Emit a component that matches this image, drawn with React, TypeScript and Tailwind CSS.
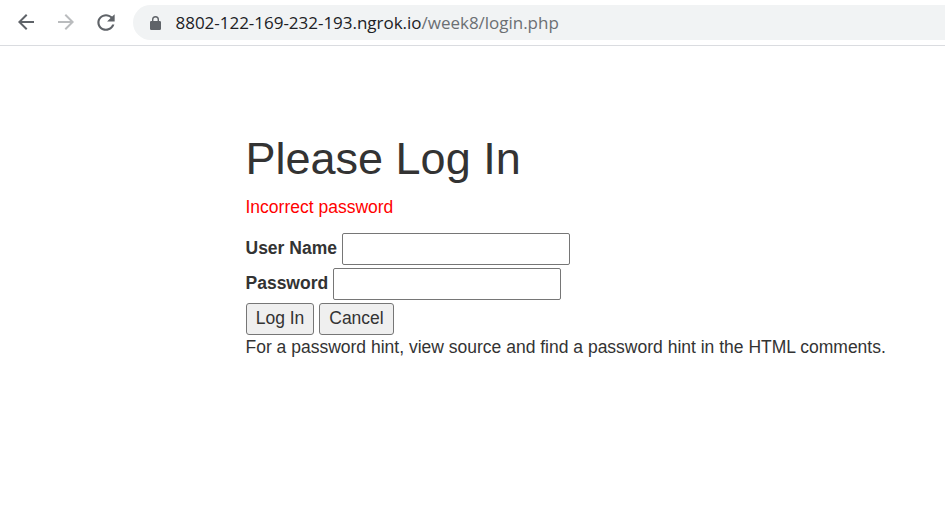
import React from "react";

const sans = "font-['Liberation_Sans',Arial,sans-serif]";

function BrowserBar() {
  return (
    <header className="flex h-[46px] items-start border-b border-[#dadce0] bg-white pl-[14px]">
      <svg className="mt-[10px] h-6 w-6 shrink-0" viewBox="0 0 24 24" fill="#5f6368">
        <path d="M20 11H7.83l5.59-5.59L12 4l-8 8 8 8 1.41-1.41L7.83 13H20v-2z" />
      </svg>
      <svg className="mt-[10px] ml-[15.5px] h-6 w-6 shrink-0" viewBox="0 0 24 24" fill="#babcbe">
        <path d="M12 4l-1.41 1.41L16.17 11H4v2h12.17l-5.58 5.59L12 20l8-8z" />
      </svg>
      <svg className="mt-[9.5px] ml-[15px] h-[25px] w-[26px] shrink-0" viewBox="0 0 24 24" preserveAspectRatio="none" fill="#5f6368">
        <path d="M17.65 6.35C16.2 4.9 14.21 4 12 4c-4.42 0-7.99 3.58-7.99 8s3.57 8 7.99 8c3.73 0 6.84-2.55 7.73-6h-2.08c-.82 2.33-3.04 4-5.65 4-3.31 0-6-2.69-6-6s2.69-6 6-6c1.66 0 3.14.69 4.22 1.78L13 11h7V4l-2.35 2.35z" />
      </svg>
      <div className="mt-[5px] ml-[14.5px] flex h-[35px] flex-1 items-center rounded-l-full bg-[#f1f3f4] pl-[17px]">
        <svg className="h-[14px] w-[11px] shrink-0" viewBox="0 0 11 14" fill="#5f6368">
          <path fillRule="evenodd" d="M2 5V3.5a3.5 3.5 0 0 1 7 0V5h.7A1.3 1.3 0 0 1 11 6.3v6.4A1.3 1.3 0 0 1 9.7 14H1.3A1.3 1.3 0 0 1 0 12.7V6.3A1.3 1.3 0 0 1 1.3 5H2zm1.4 0h4.2V3.5a2.1 2.1 0 0 0-4.2 0V5z" />
        </svg>
        <span className="ml-[14.5px] font-['Open_Sans','Noto_Sans',sans-serif] text-[17px] leading-[24px] tracking-[-0.02px] whitespace-nowrap text-[#202124]">
          8802-122-169-232-193.ngrok.io<span className="text-[#6b6f73]">/week8/login.php</span>
        </span>
      </div>
    </header>
  );
}

export default function App() {
  const field = "h-8 w-[228px] rounded-[2px] border border-[#767676] bg-white px-1 outline-none";
  const button = "h-8 rounded-[3px] border border-[#767676] bg-[#efefef] pb-[2px] text-center leading-[25px]";
  return (
    <div className={`h-[510px] overflow-hidden bg-white text-[17.5px] leading-[25px] text-[#333] ${sans}`}>
      <BrowserBar />
      <main className="pt-[88px] pl-[246px]">
        <h1 className="-ml-[0.5px] text-[45px] leading-[50px] font-medium">Please Log In</h1>
        <p className="mt-[11px] -ml-[0.5px] text-[#ff0000]">Incorrect password</p>
        <form className="mt-[13px]" onSubmit={(e) => e.preventDefault()}>
          <div className="flex items-start">
            <label htmlFor="nam" className="mt-[3px] -ml-[0.5px] w-[96.5px] font-bold whitespace-nowrap">User Name</label>
            <input id="nam" type="text" className={field} />
          </div>
          <div className="mt-[3px] flex items-start">
            <label htmlFor="pass" className="mt-[3px] -ml-[0.5px] w-[87.5px] font-bold whitespace-nowrap">Password</label>
            <input id="pass" type="password" className={field} />
          </div>
          <div className="mt-[3px] flex gap-[5px]">
            <button type="submit" className={`w-[68px] ${button}`}>Log In</button>
            <button type="button" className={`w-[75px] ${button}`}>Cancel</button>
          </div>
        </form>
        <p className="-ml-[0.5px] whitespace-nowrap">For a password hint, view source and find a password hint in the HTML comments.</p>
      </main>
    </div>
  );
}
